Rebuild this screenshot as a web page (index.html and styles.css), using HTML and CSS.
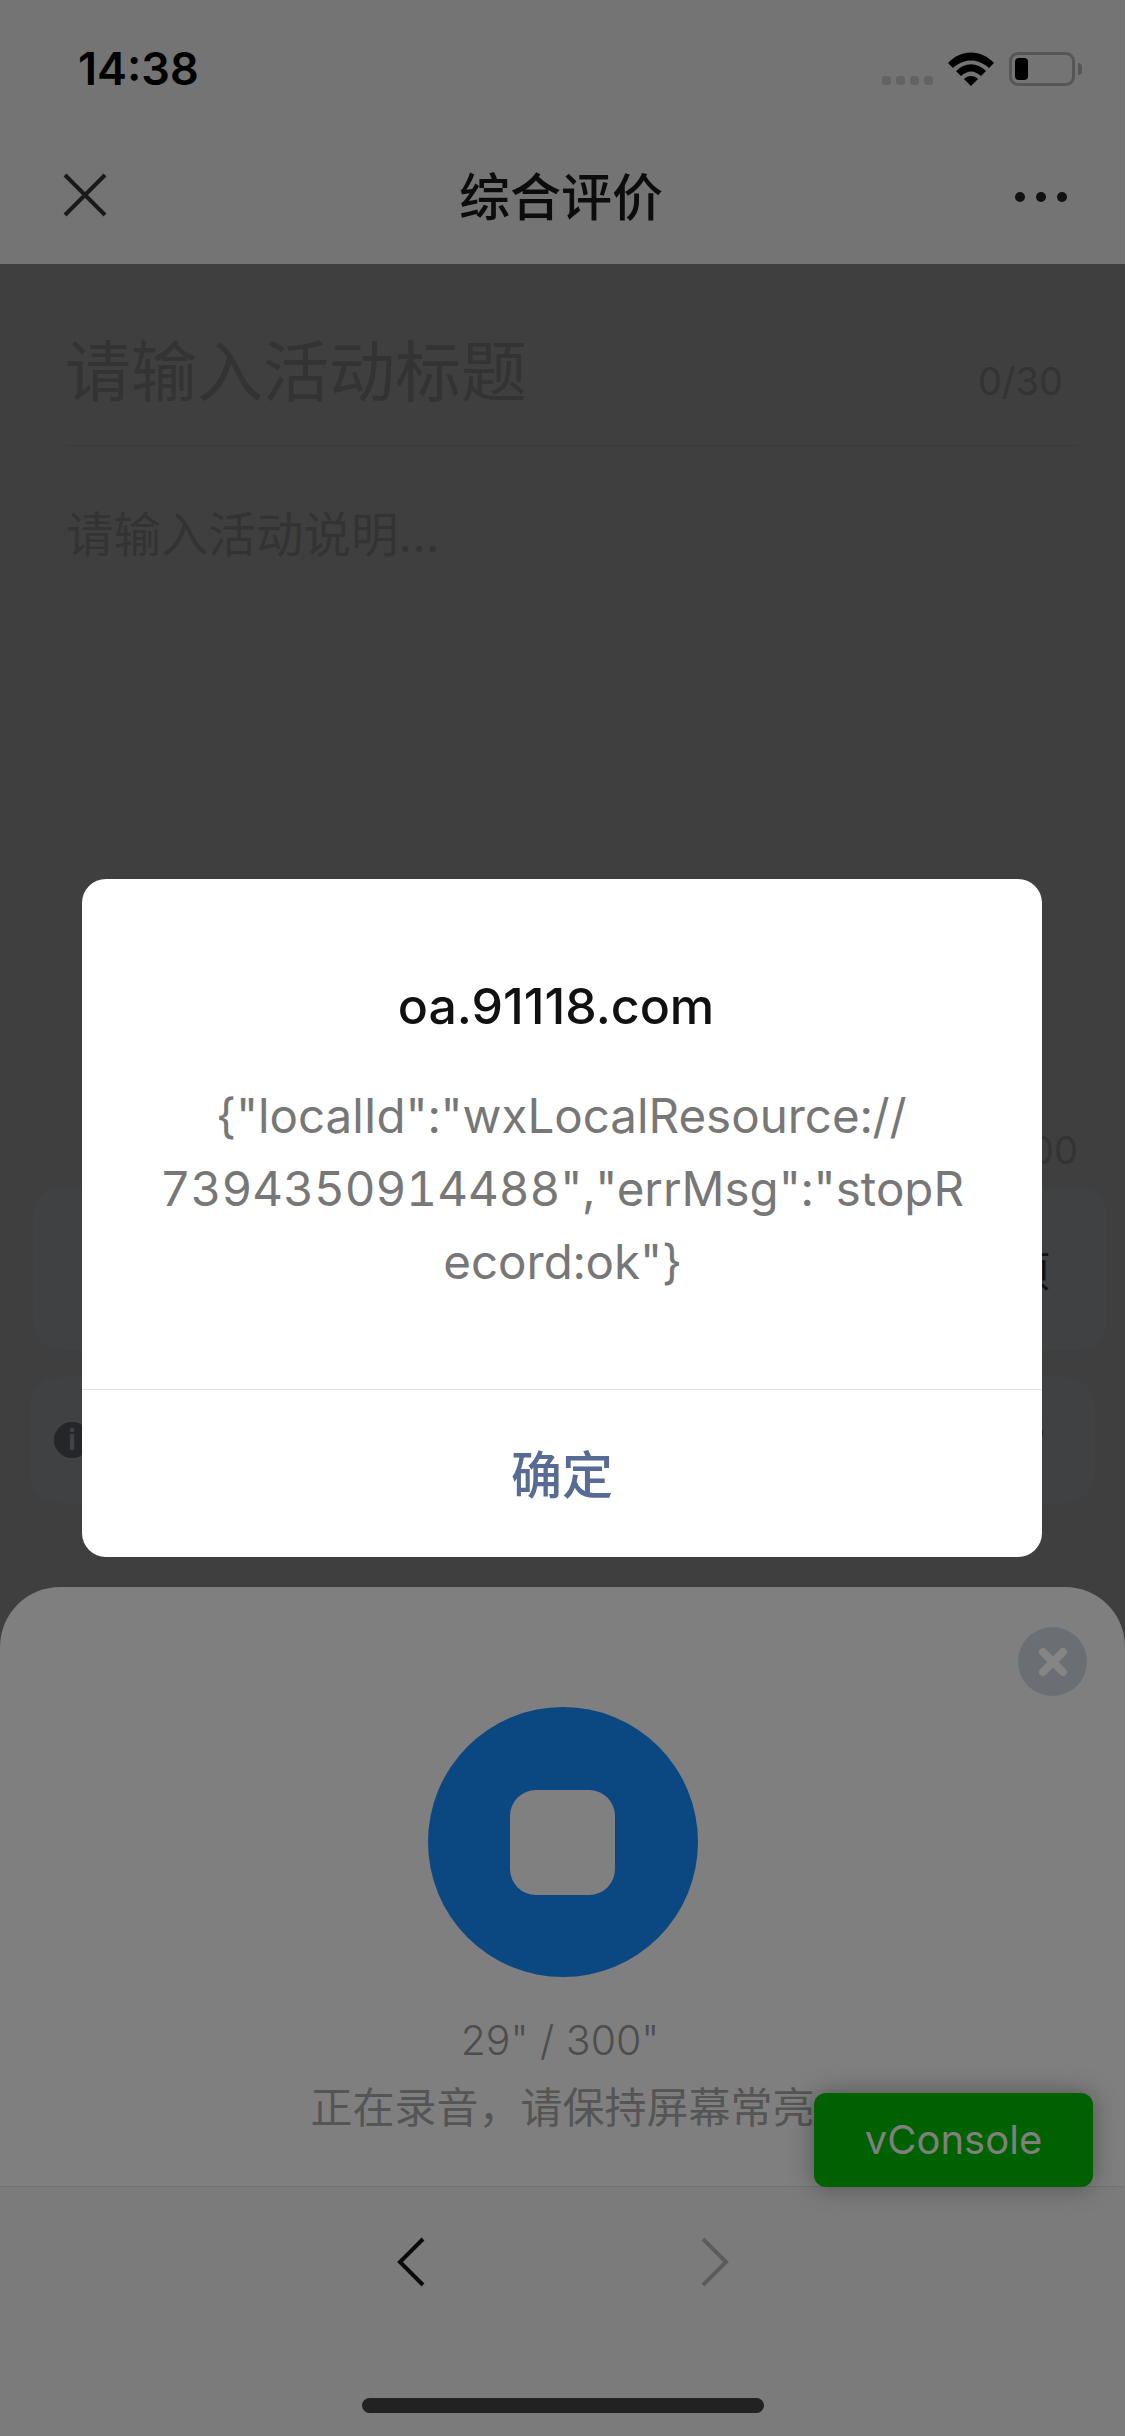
FILE: index.html
```html
<!DOCTYPE html>
<html lang="zh-CN">
<head>
    <meta charset="UTF-8">
    <title>综合评价</title>
    <link rel="stylesheet" href="styles.css">
</head>
<body>
    <div class="phone">
        <!-- status bar + title bar -->
        <header class="top">
            <div class="status">
                <span class="time">14:38</span>
                <div class="status-icons">
                    <div class="signal"><i></i><i></i><i></i><i></i></div>
                    <svg class="wifi" width="46" height="34" viewBox="0 0 46 34">
                        <path d="M0 11 C13 -3 33 -3 46 11 L41 16 C30 6 16 6 5 16 Z" fill="#000"/>
                        <path d="M8 19 C17 10 29 10 38 19 L33 24 C26 18 20 18 13 24 Z" fill="#000"/>
                        <path d="M16 27 C20 23 26 23 30 27 L23 34 Z" fill="#000"/>
                    </svg>
                    <div class="battery"><b></b></div>
                    <div class="battery-nub"></div>
                </div>
            </div>
            <div class="navbar">
                <svg class="nav-close" width="44" height="44" viewBox="0 0 44 44">
                    <path d="M2 2 L42 42 M42 2 L2 42" stroke="#1a1a1a" stroke-width="4" fill="none"/>
                </svg>
                <h1 class="nav-title">综合评价</h1>
                <div class="nav-more"><i></i><i></i><i></i></div>
            </div>
        </header>

        <!-- page behind the alert -->
        <main class="content">
            <div class="title-row">
                <span class="title-input">请输入活动标题</span>
                <span class="title-count">0/30</span>
            </div>
            <p class="desc-input">请输入活动说明...</p>
            <div class="desc-count">0/300</div>
            <div class="card card-upload"><span>项</span></div>
            <div class="card card-tip">
                <span class="tip-icon">i</span>
                <span class="tip-text">S</span>
            </div>

            <div class="alert">
                <div class="alert-body">
                    <h2 class="alert-title">oa.91118.com</h2>
                    <p class="alert-text">{"localId":"wxLocalResource://<br>7394350914488","errMsg":"stopR<br>ecord:ok"}</p>
                </div>
                <div class="alert-btn">确定</div>
            </div>
        </main>

        <!-- recording sheet -->
        <section class="sheet">
            <div class="sheet-close">
                <svg width="34" height="34" viewBox="0 0 34 34">
                    <path d="M7 7 L27 27 M27 7 L7 27" stroke="#858585" stroke-width="8" stroke-linecap="round"/>
                </svg>
            </div>
            <div class="rec-btn"><div class="rec-stop"></div></div>
            <div class="rec-time">29" / 300"</div>
            <div class="rec-tip">正在录音，请保持屏幕常亮</div>
        </section>

        <footer class="bottom">
            <div class="bottom-nav">
                <svg width="28" height="50" viewBox="0 0 28 50">
                    <path d="M26 2 L3 25 L26 48" stroke="#0a0a0a" stroke-width="4" fill="none"/>
                </svg>
                <svg width="28" height="50" viewBox="0 0 28 50">
                    <path d="M2 2 L25 25 L2 48" stroke="#5c5c5c" stroke-width="4" fill="none"/>
                </svg>
            </div>
            <div class="home-bar"></div>
        </footer>

        <div class="vconsole">vConsole</div>
    </div>
</body>
</html>
```

FILE: styles.css
```css
* {
    box-sizing: border-box;
}

body {
    margin: 0;
    font-family: Inter, "Noto Sans CJK SC", sans-serif;
}

.phone {
    position: relative;
    width: 1125px;
    height: 2436px;
    display: flex;
    flex-direction: column;
    overflow: hidden;
    background: #3f3f3f;
}

.top {
    height: 264px;
    flex: none;
    background: #747474;
}

.status {
    height: 132px;
    padding: 42px 43px 0 78px;
    display: flex;
    justify-content: space-between;
}

.time {
    font-size: 45px;
    line-height: 54px;
    font-weight: 600;
    color: #000;
}

.status-icons {
    display: flex;
    align-items: flex-start;
    padding-top: 10px;
}

.signal {
    display: flex;
    gap: 5px;
    margin: 24px 15px 0 0;
}

.signal i {
    width: 9px;
    height: 9px;
    border-radius: 3px;
    background: #636363;
}

.wifi {
    margin-right: 15px;
}

.battery {
    width: 66px;
    height: 34px;
    padding: 3px;
    border: 3px solid #565656;
    border-radius: 9px;
}

.battery b {
    display: block;
    width: 13px;
    height: 22px;
    border-radius: 4px;
    background: #000;
}

.battery-nub {
    width: 4px;
    height: 12px;
    margin: 11px 0 0 3px;
    border-radius: 0 6px 6px 0;
    background: #565656;
}

.navbar {
    height: 132px;
    padding: 0 58px 0 63px;
    display: flex;
    justify-content: space-between;
    align-items: center;
}

.nav-close {
    flex: none;
    margin-top: -6px;
}

.nav-title {
    margin: 0;
    font-size: 51px;
    line-height: 70px;
    font-weight: 500;
    color: #0c0c0c;
}

.nav-more {
    display: flex;
    gap: 11px;
    margin-top: -3px;
}

.nav-more i {
    width: 10px;
    height: 10px;
    border-radius: 50%;
    background: #111;
}

.content {
    position: relative;
    flex: 1;
    padding: 0 47px 0 66px;
}

.title-row {
    height: 182px;
    padding-top: 34px;
    display: flex;
    justify-content: space-between;
    align-items: center;
    border-bottom: 1px solid #3a3a3a;
}

.title-input {
    margin-left: -1px;
    font-size: 66px;
    line-height: 90px;
    color: #333;
}

.title-count {
    margin: 18px 15px 0 0;
    font-size: 38px;
    color: #333;
}

.desc-input {
    margin: 56px 0 0 0;
    font-size: 47.5px;
    line-height: 66px;
    color: #333;
}

.desc-count {
    margin-top: 559px;
    font-size: 38px;
    line-height: 46px;
    text-align: right;
    color: #333;
}

.card {
    display: flex;
    justify-content: space-between;
    align-items: center;
    background: #404143;
    border-radius: 28px;
}

.card-upload {
    height: 163px;
    margin: 14px -29px 0 -33px;
    padding-right: 57px;
    justify-content: flex-end;
    font-size: 42px;
    color: #111;
}

.card-tip {
    height: 126px;
    margin: 27px -17px 0 -36px;
    padding: 0 50px 30px 24px;
    font-size: 42px;
    color: #111;
}

.tip-icon {
    width: 36px;
    height: 36px;
    margin-top: 30px;
    border-radius: 50%;
    background: #24262a;
    color: #414244;
    font-size: 28px;
    line-height: 36px;
    font-weight: 700;
    text-align: center;
}

/* alert sits on top of the page */
.alert {
    position: absolute;
    left: 82px;
    top: 615px;
    width: 960px;
    height: 678px;
    display: flex;
    flex-direction: column;
    background: #fff;
    border-radius: 24px;
    text-align: center;
}

.alert-body {
    flex: 1;
    padding-top: 92px;
    border-bottom: 1px solid #e2e2e2;
}

.alert-title {
    margin: 0 12px 0 0;
    font-size: 50px;
    line-height: 70px;
    font-weight: 500;
    color: #111;
}

.alert-text {
    margin: 38px 0 0;
    font-size: 47.5px;
    line-height: 73px;
    font-variant-numeric: tabular-nums;
    color: #777;
}

.alert-btn {
    height: 167px;
    padding-top: 2px;
    font-size: 51px;
    line-height: 168px;
    font-weight: 500;
    color: #576b95;
}

.sheet {
    position: relative;
    height: 600px;
    flex: none;
    padding-top: 120px;
    display: flex;
    flex-direction: column;
    align-items: center;
    background: #7f7f7f;
    border-radius: 60px 60px 0 0;
    border-bottom: 1px solid #727272;
}

.sheet-close {
    position: absolute;
    top: 40px;
    right: 38px;
    width: 69px;
    height: 69px;
    display: flex;
    justify-content: center;
    align-items: center;
    border-radius: 50%;
    background: #6b6f74;
}

.rec-btn {
    width: 270px;
    height: 270px;
    display: flex;
    justify-content: center;
    align-items: center;
    border-radius: 50%;
    background: #0b4781;
}

.rec-stop {
    width: 105px;
    height: 105px;
    border-radius: 26px;
    background: #808080;
}

.rec-time {
    margin: 38px 5px 0 0;
    font-size: 41px;
    line-height: 50px;
    font-weight: 300;
    color: #4d4d4d;
}

.rec-tip {
    margin-top: 13px;
    font-size: 42px;
    line-height: 60px;
    color: #555;
}

.bottom {
    height: 249px;
    flex: none;
    background: #7b7b7b;
}

.bottom-nav {
    height: 211px;
    padding: 50px 0 0 397px;
    display: flex;
    align-items: flex-start;
    gap: 276px;
}

.home-bar {
    width: 402px;
    height: 15px;
    margin-left: 362px;
    border-radius: 8px;
    background: #222;
}

.vconsole {
    position: absolute;
    left: 814px;
    top: 2093px;
    width: 279px;
    height: 94px;
    border-radius: 12px;
    background: #006100;
    box-shadow: 0 0 24px rgba(0, 0, 0, 0.35);
    font-size: 40px;
    line-height: 94px;
    text-align: center;
    color: #7f7f7f;
}
```
